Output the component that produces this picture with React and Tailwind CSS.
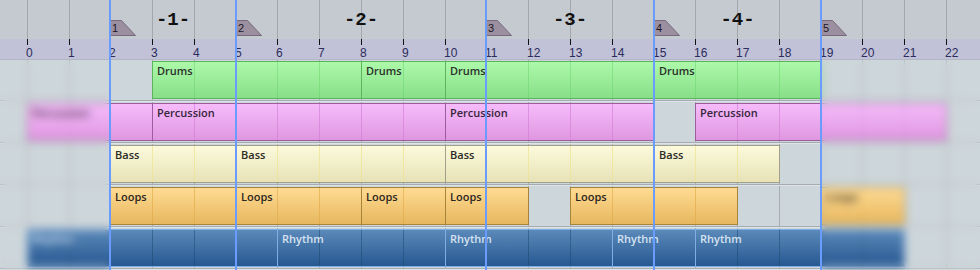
import React from 'react';

// timeline scale: pixels per beat and x of beat 0
const PX = 41.78;
const X0 = 27.3;
const bx = (b) => Math.floor(X0 + PX * b);

const BEATS = Array.from({ length: 23 }, (_, i) => i);
const LOOP_LINES = [2, 5, 11, 15, 19];

const MARKERS = [
  { n: 1, beat: 2 },
  { n: 2, beat: 5 },
  { n: 3, beat: 11 },
  { n: 4, beat: 15 },
  { n: 5, beat: 19 },
];

const SECTIONS = [
  { label: '-1-', from: 2, to: 5 },
  { label: '-2-', from: 5, to: 11 },
  { label: '-3-', from: 11, to: 15 },
  { label: '-4-', from: 15, to: 19 },
];

const STYLES = {
  drums: {
    clip: 'bg-linear-to-b from-[#acf9aa] to-[#88df88] border-[#5cb45c] text-[#2a2f2a]',
    line: 'bg-[#6ad46a]/50',
  },
  perc: {
    clip: 'bg-linear-to-b from-[#f6bbfb] to-[#df97e0] border-[#9c5c9e] text-[#36263a]',
    line: 'bg-[#d27ad6]/60',
  },
  bass: {
    clip: 'bg-linear-to-b from-[#fcfadc] to-[#e7e2b6] border-[#a3a08a] text-[#2b2b26]',
    line: 'bg-[#eee28e]/70',
  },
  loops: {
    clip: 'bg-linear-to-b from-[#ffdb92] to-[#e6b75e] border-[#a8843a] text-[#2b261e]',
    line: 'bg-[#e0a844]/60',
  },
  rhythm: {
    clip: 'bg-linear-to-b from-[#5b89b9] to-[#265891] border-[#7eaee6] text-[#d6e3f1]',
    line: 'bg-[#1d4670]/50',
  },
};

const TRACKS = [
  { kind: 'drums', clips: [[3, 8, 'Drums'], [8, 10, 'Drums'], [10, 15, 'Drums'], [15, 19, 'Drums']] },
  { kind: 'perc', clips: [[0, 3, 'Percussion'], [3, 10, 'Percussion'], [10, 15, 'Percussion'], [16, 22, 'Percussion']] },
  { kind: 'bass', clips: [[2, 5, 'Bass'], [5, 10, 'Bass'], [10, 15, 'Bass'], [15, 18, 'Bass']] },
  { kind: 'loops', clips: [[2, 5, 'Loops'], [5, 8, 'Loops'], [8, 10, 'Loops'], [10, 12, 'Loops'], [13, 17, 'Loops'], [19, 21, 'Loops']] },
  { kind: 'rhythm', clips: [[0, 6, 'Rhythm'], [6, 10, 'Rhythm'], [10, 14, 'Rhythm'], [14, 16, 'Rhythm'], [16, 21, 'Rhythm']] },
];

const Clip = ({ start, end, label, kind }) => {
  const s = STYLES[kind];
  const left = bx(start);
  const inner = BEATS.filter((b) => b > start && b < end);
  return (
    <div className={`absolute top-[1px] h-[38px] border ${s.clip}`} style={{ left, width: bx(end) - left + 1 }}>
      {inner.map((b) => (
        <div key={b} className={`absolute top-0 bottom-0 w-px ${s.line}`} style={{ left: bx(b) - left - 1 }} />
      ))}
      <span className="relative block pl-[4px] pt-[2px] text-[11px] leading-[13px] font-semibold">{label}</span>
    </div>
  );
};

const Flag = ({ n, beat }) => (
  <div className="absolute top-[20px] h-[16px] w-[27px]" style={{ left: bx(beat) }}>
    <svg width="27" height="16" viewBox="0 0 27 16" className="absolute inset-0">
      <polygon points="0.5,0.5 11.5,0.5 25.5,15.5 0.5,15.5" fill="#9c90a0" stroke="#75697b" strokeWidth="1" />
    </svg>
    <span className="relative block pl-[2px] pt-[1px] text-[11px] leading-[14px] text-[#1e1624] font-['Liberation_Sans',sans-serif]">
      {n}
    </span>
  </div>
);

export default function App() {
  return (
    <div className="relative w-[980px] h-[270px] overflow-hidden bg-[#cdd6da] font-['Open_Sans',sans-serif] flex flex-col">
      {/* arrangement header with section markers */}
      <div className="relative h-[39px] bg-[#c5cad0]">
        {BEATS.map((b) => (
          <div key={b} className="absolute top-0 bottom-0 w-px bg-[#a3a7ad]" style={{ left: bx(b) }} />
        ))}
        {SECTIONS.map((s) => {
          const c = (bx(s.from) + bx(s.to)) / 2;
          return (
            <div
              key={s.label}
              className="absolute top-[8px] w-[60px] -ml-[30px] text-center text-[19px] leading-[24px] font-bold text-[#111] font-['Liberation_Mono',monospace]"
              style={{ left: c }}
            >
              {s.label}
            </div>
          );
        })}
        {MARKERS.map((m) => (
          <Flag key={m.n} {...m} />
        ))}
      </div>

      {/* beat ruler */}
      <div className="relative h-[21px] bg-[#c1c1d7] border-b border-[#b3b6c4]">
        {BEATS.map((b) => (
          <div key={b} className="absolute top-0" style={{ left: bx(b) }}>
            <div className="w-px h-[6px] bg-[#111]" />
            <span className="block mt-[2px] -ml-px text-[12px] leading-[12px] text-[#2b2d5c] font-['Liberation_Sans',sans-serif]">
              {b}
            </span>
          </div>
        ))}
      </div>

      {/* tracks */}
      <div className="relative flex-1">
        {BEATS.map((b) => (
          <div key={b} className="absolute top-0 bottom-0 w-px bg-[#a8adb1]" style={{ left: bx(b) }} />
        ))}
        <div className="relative flex flex-col">
          {TRACKS.map((t) => (
            <div key={t.kind} className="flex flex-col h-[42px]">
              <div className="relative h-[40px]">
                {t.clips.map(([s, e, label]) => (
                  <Clip key={s} start={s} end={e} label={label} kind={t.kind} />
                ))}
              </div>
              <div className="h-px bg-[#a6abb0]" />
              <div className="h-px bg-[#dde3e6]" />
            </div>
          ))}
        </div>
        {/* out-of-range areas are shown blurred */}
        <div className="absolute top-0 bottom-0 left-0 w-[110px] backdrop-blur-[4px]" />
        <div className="absolute top-0 bottom-0 left-[821px] right-0 backdrop-blur-[4px]" />
      </div>

      {/* loop / section lines */}
      {LOOP_LINES.map((b) => (
        <div key={b} className="absolute top-0 bottom-0 w-[2px] bg-[#6a9bff]" style={{ left: bx(b) - 1 }} />
      ))}
    </div>
  );
}
